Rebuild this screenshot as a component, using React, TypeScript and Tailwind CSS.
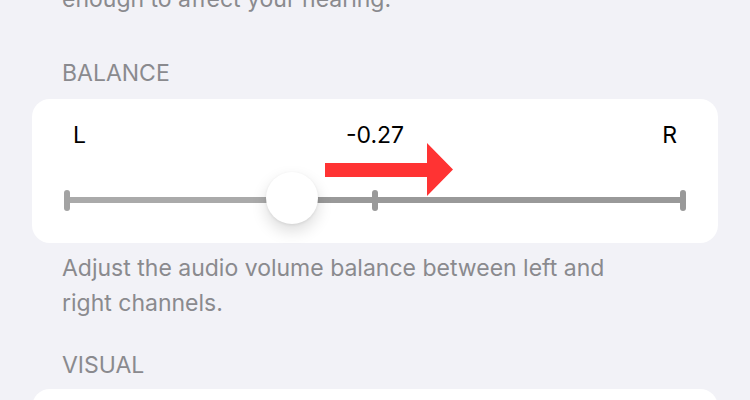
import React from "react";

function Tick({ color }: { color: string }) {
  return <div className="w-[6px] h-[21px] rounded-full shrink-0" style={{ backgroundColor: color }} />;
}

export default function App() {
  const font = { fontFamily: "Inter, 'Noto Sans', sans-serif" };
  return (
    <div className="w-[750px] h-[400px] overflow-hidden bg-[#f2f2f7] flex flex-col" style={font}>
      <div className="shrink-0 px-[62px] mt-[-15px] h-[28px] leading-[28px] text-[23px] text-[#8a8a8e] whitespace-nowrap">
        enough to affect your hearing.
      </div>
      <div className="shrink-0 px-[62px] mt-[46px] h-[28px] leading-[28px] text-[23px] text-[#8a8a8e]">
        BALANCE
      </div>
      <div className="shrink-0 mx-[32px] mt-[12px] h-[144px] rounded-[18px] bg-white relative flex flex-col">
        <div className="shrink-0 grid grid-cols-3 pt-[22px] px-[41px] h-[50px] leading-[28px] text-[23px] text-black">
          <span>L</span>
          <span className="text-center">-0.27</span>
          <span className="text-right">R</span>
        </div>
        {/* slider */}
        <div className="shrink-0 relative mx-[32px] mt-[41px] h-[20px] flex items-center">
          <Tick color="#a3a3a3" />
          <div className="w-[222px] h-[6px] bg-[#aaaaaa]" />
          <div className="w-[80px] h-[6px] bg-[#999999]" />
          <Tick color="#999999" />
          <div className="flex-1 h-[6px] bg-[#999999]" />
          <Tick color="#999999" />
          <div className="absolute left-[202px] top-[-18px] w-[52px] h-[52px] rounded-full bg-white shadow-[0_7px_16px_rgba(0,0,0,0.14),0_1px_3px_rgba(0,0,0,0.08)]" />
        </div>
        <svg className="absolute left-[293px] top-[44px]" width="130" height="60" viewBox="0 0 130 60">
          <polygon points="0,20 102,20 102,0 128,26.5 102,53 102,34 0,34" fill="#ff3333" />
        </svg>
      </div>
      <div className="shrink-0 px-[62px] mt-[8px] text-[23px] leading-[35px] text-[#8a8a8e]">
        <div>Adjust the audio volume balance between left and</div>
        <div>right channels.</div>
      </div>
      <div className="shrink-0 px-[62px] mt-[30px] h-[28px] leading-[28px] text-[23px] text-[#8a8a8e]">
        VISUAL
      </div>
      <div className="mx-[32px] mt-[10px] h-[60px] shrink-0 rounded-[18px] bg-white" />
    </div>
  );
}
